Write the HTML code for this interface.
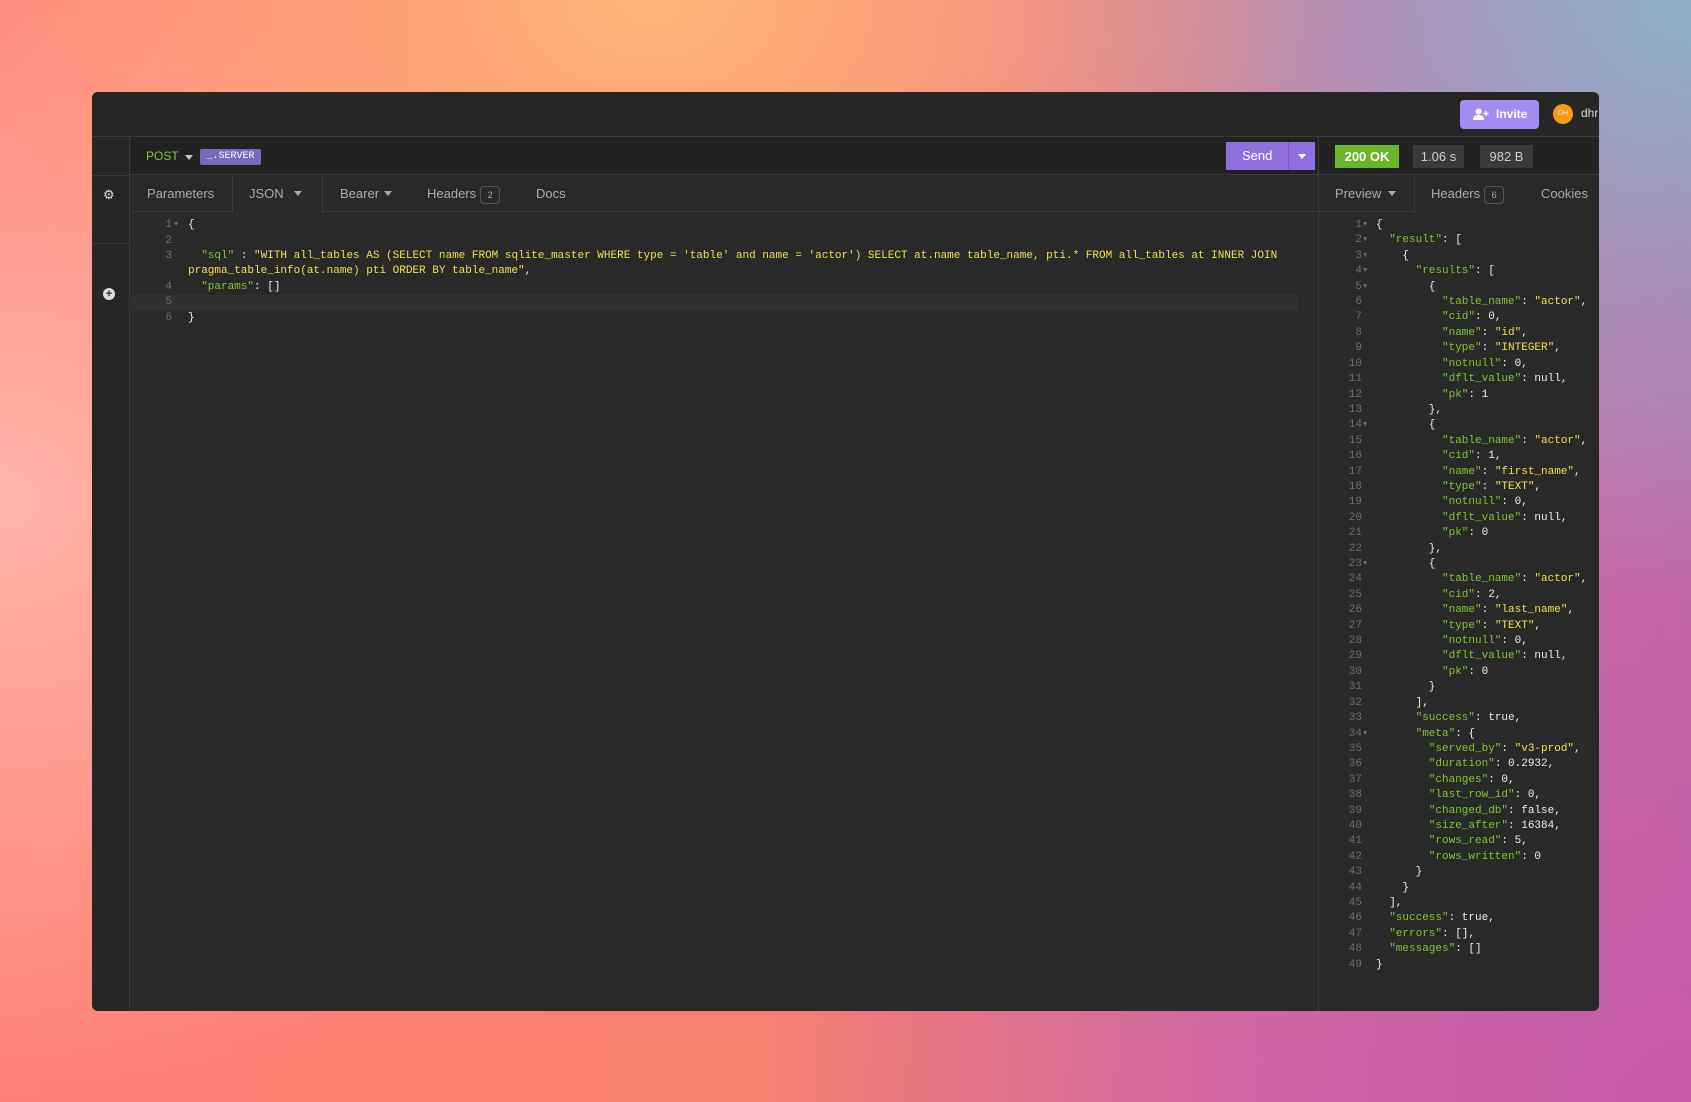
<!DOCTYPE html>
<html><head><meta charset="utf-8"><style>
*{margin:0;padding:0;box-sizing:border-box}
body{width:1691px;height:1102px;overflow:hidden;position:relative;font-family:"Liberation Sans",sans-serif;
background:
radial-gradient(ellipse 700px 500px at 650px 0px,#fdb57a 0%,rgba(253,181,122,0) 100%),
radial-gradient(ellipse 700px 600px at 1691px 0px,#8eb0c9 0%,rgba(142,176,201,0) 100%),
radial-gradient(ellipse 900px 700px at 1691px 1102px,#c45aa8 0%,rgba(196,90,168,0) 100%),
radial-gradient(ellipse 700px 600px at 0px 500px,#ffb4a8 0%,rgba(255,180,168,0) 100%),
linear-gradient(90deg,#ff7f74 0%,#f78070 45%,#d9709a 75%,#c06aaa 100%);}
.a{position:absolute}
.win{left:92px;top:92px;width:1507px;height:919px;background:#292929;border-radius:6px;overflow:hidden}
.mono{font-family:"Liberation Mono",monospace;font-size:11px;white-space:pre}
.k{color:#7ec832}.s{color:#f2e04c}.w{color:#eee}.g{color:#6f6f6f}
.ln{position:absolute;height:15.4px;line-height:15.4px}
.tab{position:absolute;top:0;height:37px;line-height:37px;font-size:13px;color:#aaa}
.badge{display:inline-block;border:1px solid #555;border-radius:4px;font-size:9px;width:20px;height:18px;line-height:16px;text-align:center;vertical-align:middle;margin-left:4px;color:#aaa}
</style></head><body>
<div class="a win">
 <div class="a" style="left:0;top:0;width:1507px;height:45px;background:#262626;border-bottom:1px solid #3a3a3a"></div>
 <div class="a" style="left:1368px;top:8px;width:79px;height:29px;background:#a48cf5;border-radius:4px;color:#fff;font-size:12px;font-weight:bold;line-height:29px;padding-left:36px">Invite
  <svg class="a" style="left:13px;top:8px" width="16" height="13" viewBox="0 0 16 13"><circle cx="5.5" cy="3.5" r="3" fill="#fff"/><path d="M0 12c0-4 2.5-5 5.5-5s5.5 1 5.5 5z" fill="#fff"/><path d="M13 3v5M10.5 5.5h5" stroke="#fff" stroke-width="1.5"/></svg></div>
 <div class="a" style="left:1461px;top:12px;width:20px;height:20px;border-radius:50%;background:#f39c12;color:#fde;font-size:7px;line-height:20px;text-align:center">DH</div>
 <div class="a" style="left:1489px;top:14px;color:#ddd;font-size:12px">dhr</div>
 <div class="a" style="left:0;top:45px;width:38px;height:874px;background:#262626;border-right:1px solid #3a3a3a"></div>
 <div class="a" style="left:0;top:83px;width:38px;height:1px;background:#3a3a3a"></div>
 <div class="a" style="left:0;top:151px;width:38px;height:1px;background:#3a3a3a"></div>
 <div class="a" style="left:11px;top:95px;color:#ddd;font-size:13px">⚙</div>
 <div class="a" style="left:11px;top:196px;width:12px;height:12px;border-radius:50%;background:#ddd;color:#262626;font-size:11px;line-height:12px;text-align:center;font-weight:bold">+</div>
 <div class="a" style="left:39px;top:45px;width:1188px;height:38px;background:#222;border-bottom:1px solid #3a3a3a"></div>
 <div class="a" style="left:54px;top:57px;color:#7ec832;font-size:12px">POST</div>
 <div class="a" style="left:93px;top:63px;border-left:4px solid transparent;border-right:4px solid transparent;border-top:5px solid #ccc"></div>
 <div class="a mono" style="left:108px;top:57px;width:61px;height:16px;background:#7a68b8;color:#fff;font-size:10px;line-height:16px;text-align:center;border-radius:2px">_.SERVER</div>
 <div class="a" style="left:1134px;top:50px;width:89px;height:28px;background:#9070e0;color:#fff;font-size:13px;line-height:28px;padding-left:16px">Send</div>
 <div class="a" style="left:1196px;top:50px;width:1px;height:28px;background:#7a5cc8"></div>
 <div class="a" style="left:1206px;top:62px;border-left:4px solid transparent;border-right:4px solid transparent;border-top:5px solid #fff"></div>
 <div class="a" style="left:39px;top:83px;width:1188px;height:37px;border-bottom:1px solid #3a3a3a">
  <div class="tab" style="left:16px">Parameters</div>
  <div class="a" style="left:101px;top:0;width:91px;height:38px;background:#292929;border-left:1px solid #3a3a3a;border-right:1px solid #3a3a3a"></div>
  <div class="tab" style="left:118px">JSON</div>
  <div class="a" style="left:163px;top:16px;border-left:4px solid transparent;border-right:4px solid transparent;border-top:5px solid #aaa"></div>
  <div class="tab" style="left:209px">Bearer</div>
  <div class="a" style="left:253px;top:16px;border-left:4px solid transparent;border-right:4px solid transparent;border-top:5px solid #aaa"></div>
  <div class="tab" style="left:296px">Headers<span class="badge">2</span></div>
  <div class="tab" style="left:405px">Docs</div>
 </div>
 <div class="a" style="left:39px;top:203px;width:1167px;height:16px;background:#303030"></div>
 <div class="mono">
  <div class="ln g" style="left:58px;top:126px;width:22px;text-align:right">1</div><div class="ln g" style="left:82px;top:126px;font-size:7px">▼</div><div class="ln w" style="left:96px;top:126px">{</div>
  <div class="ln g" style="left:58px;top:142px;width:22px;text-align:right">2</div>
  <div class="ln g" style="left:58px;top:157px;width:22px;text-align:right">3</div>
  <div class="ln" style="left:96px;top:157px"><span class="k">  "sql"</span><span class="w"> : </span><span class="s">"WITH all_tables AS (SELECT name FROM sqlite_master WHERE type = 'table' and name = 'actor') SELECT at.name table_name, pti.* FROM all_tables at INNER JOIN</span></div>
  <div class="ln" style="left:96px;top:172px"><span class="s">pragma_table_info(at.name) pti ORDER BY table_name"</span><span class="w">,</span></div>
  <div class="ln g" style="left:58px;top:188px;width:22px;text-align:right">4</div><div class="ln" style="left:96px;top:188px"><span class="k">  "params"</span><span class="w">: []</span></div>
  <div class="ln g" style="left:58px;top:203px;width:22px;text-align:right">5</div>
  <div class="ln g" style="left:58px;top:219px;width:22px;text-align:right">6</div><div class="ln w" style="left:96px;top:219px">}</div>
 </div>
 <div class="a" style="left:1226px;top:45px;width:1px;height:874px;background:#3a3a3a"></div>
 <div class="a" style="left:1227px;top:45px;width:280px;height:38px;background:#222;border-bottom:1px solid #3a3a3a"></div>
 <div class="a" style="left:1243px;top:53px;width:64px;height:23px;background:#6ab628;color:#fff;font-weight:bold;font-size:13px;line-height:23px;text-align:center">200 OK</div>
 <div class="a" style="left:1321px;top:53px;width:51px;height:23px;background:#3a3a3a;color:#ccc;font-size:13px;line-height:23px;text-align:center">1.06 s</div>
 <div class="a" style="left:1388px;top:53px;width:53px;height:23px;background:#3a3a3a;color:#ccc;font-size:13px;line-height:23px;text-align:center">982 B</div>
 <div class="a" style="left:1227px;top:83px;width:280px;height:37px;border-bottom:1px solid #3a3a3a">
  <div class="tab" style="left:16px">Preview</div>
  <div class="a" style="left:69px;top:16px;border-left:4px solid transparent;border-right:4px solid transparent;border-top:5px solid #aaa"></div>
  <div class="a" style="left:95px;top:0;width:200px;height:38px;background:#292929;border-left:1px solid #3a3a3a"></div>
  <div class="tab" style="left:112px">Headers<span class="badge">6</span></div>
  <div class="tab" style="left:222px">Cookies</div>
 </div>
 <div class="mono" id="r"></div>
</div>
<script>
var L=[
[0,'{',1],[1,'<k>"result"</k>: [',1],[2,'{',1],[3,'<k>"results"</k>: [',1],[4,'{',1],
[5,'<k>"table_name"</k>: <s>"actor"</s>,'],[5,'<k>"cid"</k>: 0,'],[5,'<k>"name"</k>: <s>"id"</s>,'],[5,'<k>"type"</k>: <s>"INTEGER"</s>,'],[5,'<k>"notnull"</k>: 0,'],[5,'<k>"dflt_value"</k>: null,'],[5,'<k>"pk"</k>: 1'],[4,'},'],[4,'{',1],
[5,'<k>"table_name"</k>: <s>"actor"</s>,'],[5,'<k>"cid"</k>: 1,'],[5,'<k>"name"</k>: <s>"first_name"</s>,'],[5,'<k>"type"</k>: <s>"TEXT"</s>,'],[5,'<k>"notnull"</k>: 0,'],[5,'<k>"dflt_value"</k>: null,'],[5,'<k>"pk"</k>: 0'],[4,'},'],[4,'{',1],
[5,'<k>"table_name"</k>: <s>"actor"</s>,'],[5,'<k>"cid"</k>: 2,'],[5,'<k>"name"</k>: <s>"last_name"</s>,'],[5,'<k>"type"</k>: <s>"TEXT"</s>,'],[5,'<k>"notnull"</k>: 0,'],[5,'<k>"dflt_value"</k>: null,'],[5,'<k>"pk"</k>: 0'],[4,'}'],[3,'],'],
[3,'<k>"success"</k>: true,'],[3,'<k>"meta"</k>: {',1],[4,'<k>"served_by"</k>: <s>"v3-prod"</s>,'],[4,'<k>"duration"</k>: 0.2932,'],[4,'<k>"changes"</k>: 0,'],[4,'<k>"last_row_id"</k>: 0,'],[4,'<k>"changed_db"</k>: false,'],[4,'<k>"size_after"</k>: 16384,'],[4,'<k>"rows_read"</k>: 5,'],[4,'<k>"rows_written"</k>: 0'],[3,'}'],[2,'}'],[1,'],'],
[1,'<k>"success"</k>: true,'],[1,'<k>"errors"</k>: [],'],[1,'<k>"messages"</k>: []'],[0,'}']];
var h='';L.forEach(function(l,i){var t=126+i*15.41;
h+='<div class="ln g" style="left:1250px;top:'+t+'px;width:20px;text-align:right">'+(i+1)+'</div>';
if(l[2])h+='<div class="ln g" style="left:1271px;top:'+t+'px;font-size:7px">▼</div>';
h+='<div class="ln w" style="left:'+(1284+l[0]*13.2)+'px;top:'+t+'px">'+l[1].replace(/<k>/g,'<span class="k">').replace(/<\/k>/g,'</span>').replace(/<s>/g,'<span class="s">').replace(/<\/s>/g,'</span>')+'</div>';});
document.getElementById('r').innerHTML=h;
</script>
</body></html>
